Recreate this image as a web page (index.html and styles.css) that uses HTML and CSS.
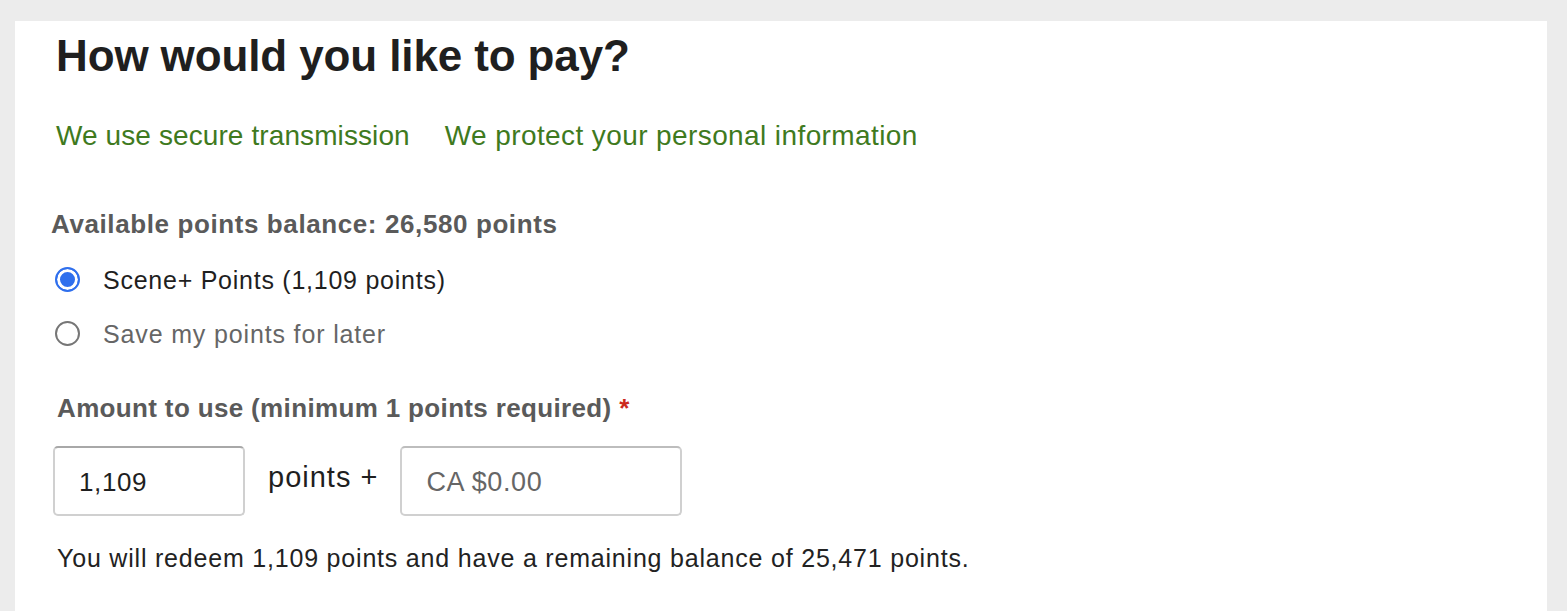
FILE: index.html
```html
<!DOCTYPE html>
<html lang="en">
<head>
<meta charset="utf-8">
<title>How would you like to pay?</title>
<link rel="stylesheet" href="styles.css">
</head>
<body>
<main class="panel">
  <h1 class="title">How would you like to pay?</h1>
  <div class="assurances">
    <span class="assurance">We use secure transmission</span>
    <span class="assurance">We protect your personal information</span>
  </div>
  <div class="balance">Available points balance: 26,580 points</div>
  <div class="options">
    <div class="option">
      <span class="radio radio-checked"></span>
      <span class="option-text">Scene+ Points (1,109 points)</span>
    </div>
    <div class="option">
      <span class="radio"></span>
      <span class="option-text option-muted">Save my points for later</span>
    </div>
  </div>
  <div class="field-label">Amount to use (minimum 1 points required) <span class="req">*</span></div>
  <div class="amount-row">
    <div class="input input-points">1,109</div>
    <span class="plus">points +</span>
    <div class="input input-cash input-placeholder">CA $0.00</div>
  </div>
  <p class="summary">You will redeem 1,109 points and have a remaining balance of 25,471 points.</p>
</main>
</body>
</html>
```

FILE: styles.css
```css
html, body {
  margin: 0;
  padding: 0;
}
body {
  background: #ececec;
  font-family: "Liberation Sans", Arial, Helvetica, sans-serif;
  color: #222;
  height: 611px;
  overflow: hidden;
}
.panel {
  display: block;
  background: #fff;
  margin: 21px 20px 0 15px;
  padding: 9px 0 0 41px;
  height: 590px;
  box-sizing: border-box;
}
.title {
  margin: 0;
  font-size: 44px;
  line-height: 52px;
  font-weight: 700;
  color: #1f1f1f;
  letter-spacing: -0.12px;
}
.assurances {
  display: flex;
  gap: 35px;
  margin-top: 36px;
  font-size: 28px;
  line-height: 36px;
  color: #3f7a1e;
}
.assurance:first-child {
  letter-spacing: 0.1px;
}
.assurance:last-child {
  letter-spacing: 0.4px;
}
.balance {
  margin: 54px 0 0 -5px;
  font-size: 26px;
  line-height: 32px;
  font-weight: 700;
  color: #5a5a5a;
  letter-spacing: 0.6px;
}
.options {
  display: flex;
  flex-direction: column;
  gap: 20px;
  margin-top: 23px;
}
.option {
  display: flex;
  align-items: center;
  height: 34px;
}
.radio {
  width: 25px;
  height: 25px;
  box-sizing: border-box;
  border-radius: 50%;
  border: 2px solid #767676;
  margin-left: -1px;
  margin-right: 23px;
  flex: none;
  position: relative;
  top: -1px;
}
.radio-checked {
  border: 2px solid #2f6fed;
  background: #2f6fed;
  box-shadow: inset 0 0 0 3px #fff;
}
.option-text {
  font-size: 25px;
  line-height: 34px;
  color: #1f1f1f;
  letter-spacing: 0.75px;
}
.option-muted {
  color: #666;
  letter-spacing: 0.85px;
}
.field-label {
  margin: 41px 0 0 1px;
  font-size: 26px;
  line-height: 32px;
  font-weight: 700;
  color: #5a5a5a;
  letter-spacing: 0.35px;
}
.req {
  color: #cc2a1e;
}
.amount-row {
  display: flex;
  align-items: flex-start;
  margin: 22px 0 0 -3px;
}
.input {
  height: 70px;
  box-sizing: border-box;
  border: 2px solid #d0d0d0;
  border-top-color: #a8a8a8;
  border-radius: 5px;
  padding: 3px 0 0 24px;
  display: flex;
  align-items: center;
  font-size: 26px;
  color: #1f1f1f;
  letter-spacing: 0.6px;
}
.input-points {
  width: 192px;
}
.input-cash {
  width: 282px;
  border-top-color: #bdbdbd;
}
.input-placeholder {
  color: #666;
  font-size: 27px;
}
.plus {
  font-size: 29px;
  line-height: 34px;
  padding-top: 14px;
  margin: 0 22px 0 23px;
  color: #1f1f1f;
  letter-spacing: 1px;
}
.summary {
  margin: 26px 0 0 1px;
  font-size: 25px;
  line-height: 32px;
  color: #222;
  letter-spacing: 0.8px;
}
```
